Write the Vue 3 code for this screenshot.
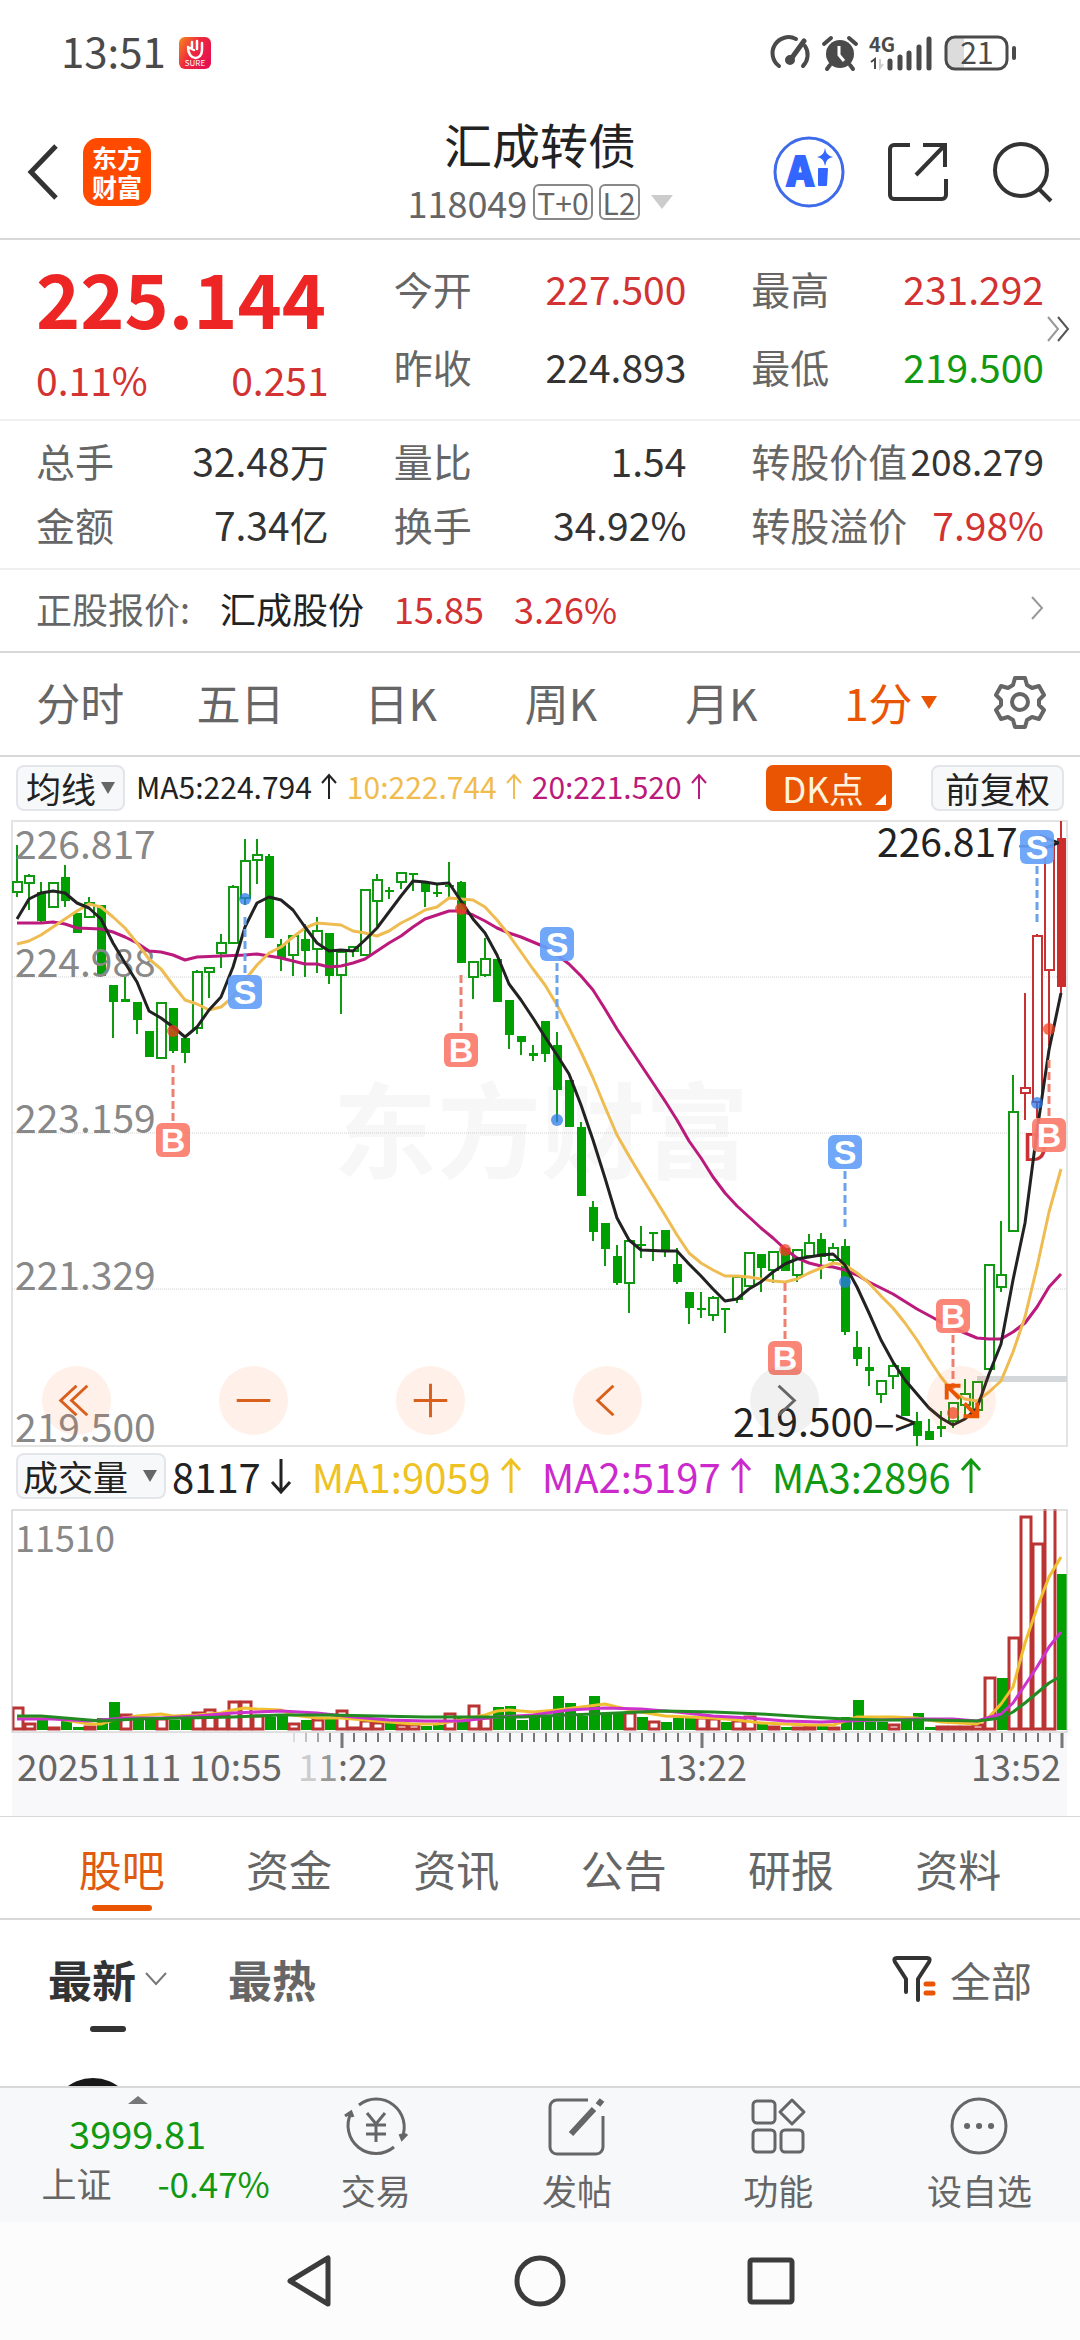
<script setup>
import { ref } from "vue";

const periods = ["分时", "五日", "日K", "周K", "月K"];
const period = ref("1分");
const average = ref("均线");
const indicator = ref("成交量");

const sections = ["股吧", "资金", "资讯", "公告", "研报", "资料"];
const section = ref("股吧");

const topQuotes = [
  [
    { label: "今开", value: "227.500", color: "red" },
    { label: "昨收", value: "224.893" },
  ],
  [
    { label: "最高", value: "231.292", color: "red" },
    { label: "最低", value: "219.500", color: "green" },
  ],
];

const details = [
  { label: "总手", value: "32.48万" },
  { label: "量比", value: "1.54" },
  { label: "转股价值", value: "208.279", color: "tight" },
  { label: "金额", value: "7.34亿" },
  { label: "换手", value: "34.92%" },
  { label: "转股溢价", value: "7.98%", color: "red" },
];

const averages = [
  { text: "MA5:224.794", color: "black" },
  { text: "10:222.744", color: "amber" },
  { text: "20:221.520", color: "magenta" },
];

const volumeAverages = [
  { text: "MA1:9059", color: "yellow" },
  { text: "MA2:5197", color: "purple" },
  { text: "MA3:2896", color: "green" },
];

const step = 12;
const xAt = (i) => 17 + i * step;

// kind (h hollow, f filled), body top, body bottom, high, low
const candles = [
  ["h", 61, 71, 24, 76], ["h", 55, 62, 53, 89], ["f", 71, 100, 61, 103], ["h", 62, 86, 62, 86],
  ["f", 56, 80, 44, 86], ["f", 92, 112, 92, 112], ["h", 82, 96, 76, 96], ["f", 84, 155, 84, 155],
  ["f", 164, 181, 164, 217], ["f", 178, 181, 156, 181], ["f", 181, 199, 181, 213], ["f", 210, 236, 210, 236],
  ["h", 182, 237, 181, 237], ["f", 187, 230, 187, 232], ["f", 217, 232, 217, 242], ["h", 151, 207, 149, 213],
  ["h", 147, 151, 147, 177], ["h", 122, 132, 113, 147], ["h", 66, 122, 64, 122], ["h", 40, 77, 18, 84],
  ["h", 34, 39, 18, 63], ["f", 35, 117, 33, 117], ["f", 123, 137, 118, 150], ["h", 115, 134, 115, 155],
  ["f", 118, 130, 103, 156], ["h", 110, 128, 96, 152], ["f", 112, 155, 112, 163], ["h", 131, 154, 131, 193],
  ["h", 126, 130, 126, 136], ["h", 69, 134, 69, 134], ["h", 59, 80, 53, 105], ["f", 69, 71, 66, 78],
  ["h", 52, 61, 52, 68], ["f", 52, 54, 52, 70], ["f", 62, 71, 62, 86], ["f", 71, 73, 64, 76],
  ["f", 64, 66, 41, 76], ["f", 61, 142, 60, 142], ["h", 141, 156, 141, 178], ["h", 138, 154, 117, 156],
  ["f", 138, 181, 138, 181], ["f", 179, 214, 179, 228], ["f", 215, 221, 215, 234], ["f", 232, 235, 224, 240],
  ["f", 200, 233, 200, 241], ["f", 224, 269, 211, 301], ["f", 259, 306, 259, 306], ["f", 306, 375, 301, 375],
  ["f", 386, 411, 380, 420], ["f", 402, 428, 402, 445], ["f", 435, 462, 424, 464], ["h", 420, 462, 420, 492],
  ["f", 423, 425, 405, 437], ["f", 411, 413, 411, 440], ["f", 409, 431, 409, 436], ["f", 443, 461, 427, 463],
  ["f", 471, 487, 471, 503], ["f", 487, 489, 471, 497], ["h", 477, 494, 475, 500], ["f", 487, 489, 487, 512],
  ["h", 456, 478, 456, 482], ["h", 432, 465, 432, 465], ["f", 433, 447, 433, 471], ["h", 431, 449, 431, 462],
  ["f", 427, 450, 427, 450], ["h", 429, 454, 429, 461], ["h", 422, 435, 413, 436], ["f", 418, 436, 412, 458],
  ["h", 427, 439, 422, 443], ["f", 425, 511, 418, 514], ["f", 526, 538, 510, 545], ["f", 546, 550, 526, 565],
  ["h", 560, 573, 560, 582], ["h", 545, 555, 542, 568], ["f", 546, 595, 546, 595], ["f", 600, 615, 591, 625],
  ["f", 610, 619, 598, 619], ["f", 605, 608, 590, 616], ["h", 582, 600, 582, 607], ["h", 573, 584, 558, 594],
  ["h", 561, 589, 561, 589], ["h", 444, 548, 444, 548], ["h", 454, 466, 400, 471], ["h", 291, 410, 254, 410],
  ["h", 267, 272, 172, 299], ["h", 115, 281, 113, 297], ["h", 26, 149, 26, 225], ["f", 17, 166, 0, 172],
].map(([kind, top, bottom, high, low], i) => ({
  x: xAt(i),
  hollow: kind === "h",
  color: i > 83 ? "#c83232" : "#119a11",
  fill: i > 83 ? "#cc2e2e" : "#00a000",
  top,
  bottom,
  high,
  low,
}));

const ma5 =
  "17,98 29,78 41,72 53,70 65,72 77,82 89,87 101,98 113,122 125,142 137,161 149,190 161,197 173,206 185,216 197,206 209,189 221,176 233,146 245,106 257,82 269,76 281,79 293,89 305,106 317,122 329,130 341,129 353,130 365,119 377,107 389,91 401,75 413,60 425,61 437,63 449,62 461,80 473,98 485,112 497,134 509,163 521,179 533,197 545,216 557,234 569,253 581,284 593,319 605,357 617,397 629,419 641,429 665,430 677,430 689,443 701,455 713,468 725,480 737,478 749,468 761,461 773,451 785,443 797,438 809,436 821,434 833,433 845,444 857,466 869,492 881,519 893,541 905,559 917,573 929,587 941,597 953,604 965,598 977,587 989,553 1001,523 1013,459 1025,402 1037,310 1049,229 1061,172";
const ma10 =
  "17,123 29,120 41,114 53,106 65,98 77,90 89,83 101,86 113,96 125,107 137,122 149,138 161,148 173,164 185,179 197,183 209,189 221,186 233,176 245,159 257,144 269,132 281,126 293,116 305,107 317,102 341,104 353,110 365,112 377,115 389,110 401,102 413,96 425,89 437,86 449,77 461,78 473,79 485,86 497,99 509,114 521,131 533,148 545,164 557,184 569,207 581,231 593,257 605,286 617,314 629,335 641,355 665,394 677,414 689,432 701,442 713,449 725,455 737,455 749,456 761,458 773,460 785,461 797,458 809,452 821,447 833,442 845,444 857,452 869,462 881,475 893,487 905,502 917,519 929,538 941,556 953,571 965,578 977,580 989,571 1001,560 1013,531 1025,496 1037,446 1049,391 1061,348";
const ma20 =
  "17,102 41,102 53,101 65,103 77,107 101,108 113,111 125,116 137,122 149,130 161,131 173,134 185,139 197,136 221,135 245,134 257,133 269,135 281,137 293,140 305,143 317,143 329,146 341,145 353,142 365,138 377,130 389,122 401,115 413,106 425,98 437,94 449,90 461,90 473,94 485,100 497,107 509,112 521,116 533,121 545,126 557,134 569,143 581,155 593,169 605,188 617,208 629,226 641,244 653,262 665,280 677,299 689,320 701,337 713,356 725,372 737,385 749,396 761,407 773,417 785,428 797,437 809,442 821,445 833,446 845,449 857,454 869,461 893,473 917,488 941,501 953,507 965,512 977,517 989,518 1001,518 1013,511 1025,502 1037,486 1049,466 1061,453";

const priceLabels = [
  { text: "226.817", y: 38 },
  { text: "224.988", y: 156 },
  { text: "223.159", y: 312 },
  { text: "221.329", y: 469 },
  { text: "219.500", y: 621 },
];

const signals = [
  { type: "B", x: 173, y: 319, from: 244, to: 302, dot: 210 },
  { type: "S", x: 245, y: 171, from: 96, to: 153, dot: 78 },
  { type: "B", x: 461, y: 229, from: 154, to: 212, dot: 88 },
  { type: "S", x: 557, y: 123, from: 142, to: 199, dot: 299 },
  { type: "B", x: 785, y: 537, from: 462, to: 519, dot: 429 },
  { type: "S", x: 845, y: 331, from: 350, to: 407, dot: 461 },
  { type: "B", x: 953, y: 495, from: 514, to: 568, dot: 592 },
  { type: "S", x: 1037, y: 26, from: 45, to: 102, dot: 282 },
  { type: "B", x: 1049, y: 314, from: 239, to: 296, dot: 208 },
];

// r red outline, g green block, then the top edge of the bar
const volumes =
  "r198 r214 g210 r218 g212 g218 r217 g209 g193 r205 g209 g208 r209 g211 g205 r203 r200 r206 r192 r192 r206 g208 g206 r214 g211 r210 g210 r201 r218 r211 r213 g214 r215 r215 g217 g216 r204 g208 r196 r208 g198 g197 g211 g207 g207 g187 g194 g207 g187 g204 g203 r203 g208 r212 g213 g209 g207 r208 r209 g213 r211 r207 g215 r217 g218 r218 r217 g217 r218 g208 g191 g213 g213 r215 g212 g204 g218 r217 r217 r217 r215 r168 g169 r128 r7 r34 r-4 g65"
    .split(" ")
    .map((bar, i) => ({ x: xAt(i), red: bar[0] === "r", top: Number(bar.slice(1)) }));

const volumeLine = (values) => values.map(([i, y]) => `${xAt(i)},${y}`).join(" ");
const volumeLines = [
  {
    color: "#f0bf30",
    points: volumeLine([[0, 208], [2, 208], [4, 211], [6, 215], [7, 215], [8, 211], [10, 207], [12, 205], [13, 207], [15, 206], [17, 204], [18, 201], [19, 199], [20, 200], [22, 201], [23, 206], [25, 209], [27, 209], [29, 211], [31, 213], [33, 215], [35, 215], [37, 211], [39, 206], [40, 202], [41, 201], [43, 203], [45, 201], [47, 198], [49, 195], [50, 198], [52, 203], [54, 207], [56, 208], [58, 209], [60, 211], [62, 214], [64, 215], [66, 216], [68, 216], [70, 208], [73, 208], [75, 209], [77, 213], [80, 215], [81, 208], [82, 195], [83, 178], [84, 134], [85, 99], [86, 68], [87, 48]]),
  },
  {
    color: "#cc33cc",
    points: volumeLine([[0, 210], [3, 210], [6, 212], [9, 209], [12, 209], [15, 207], [18, 204], [20, 203], [22, 202], [25, 204], [28, 208], [31, 211], [34, 212], [37, 212], [40, 208], [43, 206], [46, 201], [49, 199], [52, 200], [55, 203], [58, 207], [61, 209], [64, 212], [67, 213], [69, 212], [72, 211], [75, 210], [78, 210], [80, 212], [82, 205], [83, 194], [84, 176], [85, 158], [86, 138], [87, 123]]),
  },
  {
    color: "#228b22",
    points: volumeLine([[0, 207], [2, 207], [5, 210], [7, 212], [10, 210], [14, 209], [18, 208], [22, 206], [26, 206], [30, 207], [34, 208], [38, 208], [42, 208], [46, 206], [50, 204], [54, 202], [58, 203], [62, 205], [66, 208], [69, 210], [72, 211], [76, 211], [80, 212], [82, 209], [83, 203], [84, 194], [85, 184], [86, 174], [87, 167]]),
  },
];

const ticks = Array.from({ length: 65 }, (_, i) => ({
  x: 294 + i * step,
  major: i % 30 === 4,
  opacity: Math.min(1, 0.2 + i * 0.22),
}));
</script>

<template>
  <div class="page">
    <div class="status">
      <span class="clock">13:51</span>
      <svg class="app-badge" width="32" height="32" viewBox="0 0 32 32">
        <defs>
          <linearGradient id="badge" x1="0" y1="0" x2="1" y2="0.6">
            <stop offset="0" stop-color="#f68a1e" />
            <stop offset="0.5" stop-color="#ee2a3c" />
            <stop offset="1" stop-color="#e6124f" />
          </linearGradient>
        </defs>
        <rect width="32" height="32" rx="6" fill="url(#badge)" />
        <path d="M9 10c0 14 14 14 14 3V6M13 5v7M18 4v8M9 10l6 3" fill="none" stroke="#fff" stroke-width="2.5" stroke-linecap="round" />
        <text x="16" y="29" font-size="8" fill="#fff" text-anchor="middle">SURE</text>
      </svg>
      <div class="status-icons">
        <svg width="40" height="36" viewBox="0 0 40 36" fill="none" stroke="#4a4a4a" stroke-width="4" stroke-linecap="round">
          <path d="M8 31A16 16 0 0 1 25 4M34 11A16 16 0 0 1 32 31" />
          <path d="M33 6 20 24" stroke-width="5" />
          <circle cx="19" cy="25" r="3" />
        </svg>
        <svg width="36" height="36" viewBox="0 0 36 36">
          <circle cx="18" cy="19" r="14" fill="#4a4a4a" />
          <path d="M2 9 9 3M34 9 27 3M8 30 5 34M28 30l3 4" stroke="#4a4a4a" stroke-width="4" stroke-linecap="round" />
          <path d="M17 11v9l5 6" fill="none" stroke="#fff" stroke-width="3" />
        </svg>
        <svg width="64" height="36" viewBox="0 0 64 36">
          <text x="0" y="17" font-size="20" font-weight="bold" fill="#4a4a4a">4G</text>
          <path d="M2 27l4-3v10" fill="none" stroke="#4a4a4a" stroke-width="2" />
          <path d="M11 24v9l3-4" fill="none" stroke="#ccc" stroke-width="2" />
          <path d="M21 26v7M31 22v11M40 18v15M50 12v21M60 4v29" stroke="#4a4a4a" stroke-width="5" stroke-linecap="round" />
        </svg>
        <svg width="74" height="36" viewBox="0 0 74 36">
          <path d="M10 2h10v32H10a8 8 0 0 1-8-8V10a8 8 0 0 1 8-8z" fill="#dcdcdc" />
          <rect x="2" y="2" width="61" height="32" rx="9" fill="none" stroke="#4a4a4a" stroke-width="3" />
          <path d="M70 13v10" stroke="#4a4a4a" stroke-width="4" stroke-linecap="round" />
          <text x="33" y="29" font-size="30" fill="#4a4a4a" text-anchor="middle">21</text>
        </svg>
      </div>
    </div>

    <header class="header">
      <div class="header-left">
        <button class="plain" aria-label="返回">
          <svg width="34" height="60" viewBox="0 0 34 60">
            <path d="M30 4 5 30l25 26" fill="none" stroke="#333" stroke-width="5" />
          </svg>
        </button>
        <div class="logo"><span>东方</span><span>财富</span></div>
      </div>
      <div class="title">
        <h1>汇成转债</h1>
        <div class="code">
          <span>118049</span>
          <span class="tag">T+0</span>
          <span class="tag">L2</span>
          <svg width="22" height="14" viewBox="0 0 22 14"><path d="M0 0h22L11 14z" fill="#ccc" /></svg>
        </div>
      </div>
      <div class="header-right">
        <button class="plain" aria-label="Ai">
          <svg width="72" height="72" viewBox="0 0 72 72">
            <circle cx="36" cy="36" r="34" fill="none" stroke="#3d6bea" stroke-width="3" />
            <text x="14" y="50" font-size="40" class="ai">A</text>
            <path d="M46 33h8l-1 16h-7z" fill="#3366ff" stroke="#3366ff" stroke-width="2" stroke-linejoin="round" />
            <path d="M52 12q1 8 8 9-7 1-8 9-1-8-8-9 7-1 8-9z" fill="#3366ff" />
          </svg>
        </button>
        <button class="plain" aria-label="分享">
          <svg width="62" height="62" viewBox="0 0 62 62" fill="none" stroke="#333" stroke-width="4">
            <path d="M23 4H7a4 4 0 0 0-4 4v46a4 4 0 0 0 4 4h48a4 4 0 0 0 4-4V38" />
            <path d="M36 4h22v22M58 4 29 34" />
          </svg>
        </button>
        <button class="plain" aria-label="搜索">
          <svg width="62" height="62" viewBox="0 0 62 62" fill="none" stroke="#333" stroke-width="4">
            <circle cx="30" cy="29" r="26" />
            <path d="M48 48 60 60" />
          </svg>
        </button>
      </div>
    </header>

    <section class="quote">
      <div class="quote-price">
        <div class="price">225.144</div>
        <div class="pair red"><span>0.11%</span><span>0.251</span></div>
      </div>
      <div v-for="(col, i) in topQuotes" :key="i" class="quote-col">
        <div v-for="item in col" :key="item.label" class="pair">
          <span class="label">{{ item.label }}</span>
          <span :class="item.color">{{ item.value }}</span>
        </div>
      </div>
      <svg class="more" width="24" height="28" viewBox="0 0 24 28" fill="none" stroke-width="2">
        <path d="M1 2l10 12L1 26" stroke="#999" />
        <path d="M11 2l10 12-10 12" stroke="#555" />
      </svg>
    </section>

    <section class="details">
      <div v-for="item in details" :key="item.label" class="pair">
        <span class="label">{{ item.label }}</span>
        <span :class="item.color">{{ item.value }}</span>
      </div>
    </section>

    <a class="stock" href="#">
      <span class="label">正股报价:</span>
      <span class="stock-name">汇成股份</span>
      <span class="red">15.85</span>
      <span class="red">3.26%</span>
      <svg width="14" height="24" viewBox="0 0 14 24"><path d="M2 1l10 11L2 23" fill="none" stroke="#999" stroke-width="2" /></svg>
    </a>

    <nav class="periods">
      <button v-for="p in periods" :key="p" class="plain">{{ p }}</button>
      <label class="dropdown period-now">
        <select v-model="period" aria-label="分钟周期">
          <option>1分</option>
          <option>5分</option>
        </select>
        <svg width="16" height="13" viewBox="0 0 16 13"><path d="M0 0h16L8 13z" fill="#ea5504" /></svg>
      </label>
      <button class="plain" aria-label="设置">
        <svg width="54" height="54" viewBox="0 0 54 54" fill="none" stroke="#666" stroke-width="4" stroke-linejoin="round">
          <path d="M22 3h10l2 7 5 3 7-2 5 9-5 5v5l5 5-5 9-7-2-5 3-2 7H22l-2-7-5-3-7 2-5-9 5-5v-5l-5-5 5-9 7 2 5-3z" />
          <circle cx="27" cy="27" r="8" />
        </svg>
      </button>
    </nav>

    <div class="ma-row">
      <label class="dropdown box">
        <select v-model="average" aria-label="主图指标">
          <option>均线</option>
        </select>
        <svg width="14" height="12" viewBox="0 0 14 12"><path d="M0 0h14L7 12z" fill="#666" /></svg>
      </label>
      <div class="ma-values">
        <span v-for="ma in averages" :key="ma.text" :class="ma.color">
          {{ ma.text }}<svg width="18" height="26" viewBox="0 0 18 26"><path d="M9 26V2M2 10l7-8 7 8" fill="none" stroke="currentColor" stroke-width="2" /></svg>
        </span>
      </div>
      <button class="dk">DK点</button>
      <button class="box adjust">前复权</button>
    </div>

    <div class="chart">
      <svg class="plot" viewBox="0 0 1080 626">
        <text x="541" y="350" class="watermark" text-anchor="middle">东方财富</text>
        <rect x="12" y="0" width="1055" height="625" fill="none" stroke="#e4e4e4" stroke-width="2" />
        <path d="M12 156h1055M12 312h1055M12 468h1055" stroke="#d0d0d0" stroke-dasharray="1 1" />
        <rect x="977" y="555" width="90" height="6" fill="#d3d7da" />
        <g v-for="c in candles" :key="c.x">
          <path v-if="c.hollow" :d="`M${c.x} ${c.high}V${c.top}M${c.x} ${c.bottom}V${c.low}`" :stroke="c.color" stroke-width="2" />
          <path v-else :d="`M${c.x} ${c.high}V${c.low}`" :stroke="c.color" stroke-width="2" />
          <rect v-if="c.hollow" :x="c.x - 4" :y="c.top" width="9" :height="c.bottom - c.top" fill="#fff" :stroke="c.color" stroke-width="2" />
          <rect v-else :x="c.x - 4" :y="c.top" width="9" :height="c.bottom - c.top" :fill="c.fill" />
        </g>
        <text x="1022" y="340" font-size="38" fill="#c83232">D</text>
        <text v-for="label in priceLabels" :key="label.text" x="15" :y="label.y" font-size="39" fill="#888">{{ label.text }}</text>
        <g fill="none" stroke-width="3" stroke-linejoin="round">
          <polyline :points="ma20" stroke="#bb1a7c" />
          <polyline :points="ma10" stroke="#efbc52" />
          <polyline :points="ma5" stroke="#222" />
        </g>
        <g font-size="39" fill="#222">
          <text x="877" y="36">226.817–&gt;</text>
          <text x="733" y="616">219.500–&gt;</text>
        </g>
        <g v-for="s in signals" :key="s.x" :class="s.type === 'B' ? 'buy' : 'sell'">
          <circle :cx="s.x" :cy="s.dot" r="6" class="dot" />
          <path :d="`M${s.x} ${s.from}V${s.to}`" class="dash" />
          <rect :x="s.x - 17" :y="s.y - 17" width="34" height="34" rx="6" />
          <text :x="s.x" :y="s.y + 12" text-anchor="middle">{{ s.type }}</text>
        </g>
      </svg>
      <div class="controls">
        <button aria-label="最左">
          <svg viewBox="0 0 70 70"><path d="M35 20 19 35l16 15M46 20 30 35l16 15" /></svg>
        </button>
        <button aria-label="缩小">
          <svg viewBox="0 0 70 70"><path d="M18 35h34" /></svg>
        </button>
        <button aria-label="放大">
          <svg viewBox="0 0 70 70"><path d="M18 35h34M35 18v34" /></svg>
        </button>
        <button aria-label="左移">
          <svg viewBox="0 0 70 70"><path d="M41 20 25 35l16 15" /></svg>
        </button>
        <button class="off" aria-label="右移">
          <svg viewBox="0 0 70 70"><path d="M29 20l16 15-16 15" /></svg>
        </button>
        <button class="full" aria-label="全屏">
          <svg viewBox="0 0 70 70"><path d="M20 34V20h14M20 20l13 13M51 37v14H37M51 51 38 38" /></svg>
        </button>
      </div>
    </div>

    <div class="volume-row">
      <label class="dropdown box">
        <select v-model="indicator" aria-label="副图指标">
          <option>成交量</option>
        </select>
        <svg width="14" height="12" viewBox="0 0 14 12"><path d="M0 0h14L7 12z" fill="#666" /></svg>
      </label>
      <span class="now">
        8117<svg width="22" height="36" viewBox="0 0 22 36"><path d="M11 1v33M2 24l9 10 9-10" fill="none" stroke="currentColor" stroke-width="3" /></svg>
      </span>
      <span v-for="ma in volumeAverages" :key="ma.text" :class="ma.color">
        {{ ma.text }}<svg width="22" height="36" viewBox="0 0 22 36"><path d="M11 35V2M2 12l9-10 9 10" fill="none" stroke="currentColor" stroke-width="3" /></svg>
      </span>
    </div>

    <svg class="plot" viewBox="0 0 1080 307">
      <clipPath id="volume-area"><rect x="12" y="0" width="1055" height="223" /></clipPath>
      <rect x="12" y="223" width="1055" height="84" fill="#f8f8fa" />
      <text x="15" y="43" font-size="36" fill="#888">11510</text>
      <g clip-path="url(#volume-area)">
        <g v-for="v in volumes" :key="v.x">
          <rect v-if="v.red" :x="v.x - 4" :y="v.top + 1" width="10" :height="219 - v.top" fill="#fff" stroke="#bb3434" stroke-width="3" />
          <rect v-else :x="v.x - 4" :y="v.top" width="11" :height="221 - v.top" fill="#00a000" />
        </g>
        <polyline v-for="line in volumeLines" :key="line.color" :points="line.points" fill="none" :stroke="line.color" stroke-width="3" stroke-linejoin="round" />
      </g>
      <rect x="12" y="1" width="1055" height="222" fill="none" stroke="#c4c4c4" />
      <path v-for="t in ticks" :key="t.x" :d="`M${t.x} 224v${t.major ? 15 : 9}`" :stroke-width="t.major ? 3 : 2" :opacity="t.opacity" stroke="#777" />
      <g font-size="36" fill="#666">
        <text x="17" y="272" font-size="37">20251111 10:55</text>
        <text x="298" y="272"><tspan fill="#ccc">1</tspan><tspan fill="#999">1</tspan>:22</text>
        <text x="702" y="272" text-anchor="middle">13:22</text>
        <text x="1061" y="272" text-anchor="end">13:52</text>
      </g>
    </svg>

    <nav class="sections">
      <button v-for="s in sections" :key="s" class="plain" :class="{ active: s === section }" @click="section = s">{{ s }}</button>
    </nav>

    <div class="posts">
      <div class="sort">
        <button class="plain newest">
          最新<svg width="22" height="14" viewBox="0 0 22 14"><path d="M1 1l10 11L21 1" fill="none" stroke="#777" stroke-width="2" /></svg>
        </button>
        <button class="plain hottest">最热</button>
        <button class="plain filter">
          <svg width="46" height="48" viewBox="0 0 46 48" fill="none" stroke-linecap="round">
            <path d="M14 37V24L3 7q-2-4 2-4h30q4 0 2 4L26 24v21" stroke="#333" stroke-width="4" stroke-linejoin="round" />
            <path d="M34 29h7M34 38h7" stroke="#ea5504" stroke-width="5" />
          </svg>
          全部
        </button>
      </div>
      <div class="post">
        <div class="avatar"></div>
      </div>
    </div>

    <footer class="toolbar">
      <a class="index" href="#">
        <svg width="20" height="8" viewBox="0 0 20 8"><path d="M10 0l10 8H0z" fill="#777" /></svg>
        <span class="index-value">3999.81</span>
        <span class="index-change"><span>上证</span><span class="green">-0.47%</span></span>
      </a>
      <button class="plain tool">
        <svg width="66" height="60" viewBox="0 0 66 60" fill="none" stroke="#666" stroke-width="3">
          <path d="M16 9A28 28 0 0 1 59 42M51 51A28 28 0 0 1 8 17M2 20l6-4 2 5M64 38l-5 5-2-5" />
          <path d="M24 17l9 11 9-11M33 28v18M23 29h20M23 38h20" />
        </svg>
        交易
      </button>
      <button class="plain tool">
        <svg width="66" height="60" viewBox="0 0 66 60" fill="none" stroke="#666" stroke-width="3">
          <path d="M44 4H13a7 7 0 0 0-7 7v40a7 7 0 0 0 7 7h39a7 7 0 0 0 7-7V20" />
          <path d="M27 38 50 13M54 9l4-5" stroke-width="6" />
        </svg>
        发帖
      </button>
      <button class="plain tool">
        <svg width="66" height="60" viewBox="0 0 66 60" fill="none" stroke="#666" stroke-width="3">
          <rect x="8" y="5" width="22" height="22" rx="4" />
          <rect x="8" y="34" width="22" height="22" rx="4" />
          <rect x="36" y="34" width="22" height="22" rx="4" />
          <path d="M47 4 59 16 47 28 35 16z" stroke-linejoin="round" />
        </svg>
        功能
      </button>
      <button class="plain tool">
        <svg width="66" height="60" viewBox="0 0 66 60" fill="none" stroke="#666" stroke-width="3">
          <circle cx="33" cy="30" r="27" />
          <path d="M21 30h.1M33 30h.1M45 30h.1" stroke-width="6" stroke-linecap="round" />
        </svg>
        设自选
      </button>
    </footer>

    <div class="system-nav">
      <svg width="48" height="54" viewBox="0 0 48 54"><path d="M43 4v46L5 27z" /></svg>
      <svg width="54" height="54" viewBox="0 0 54 54"><circle cx="27" cy="27" r="23" /></svg>
      <svg width="48" height="54" viewBox="0 0 48 54"><rect x="3" y="6" width="42" height="42" rx="2" /></svg>
    </div>
  </div>
</template>

<style>
body {
  margin: 0;
  background: #fff;
}
</style>

<style scoped>
.page {
  display: flex;
  flex-direction: column;
  min-height: 100vh;
  font-family: "Noto Sans CJK SC", sans-serif;
  font-size: 39px;
  color: #333;
}
svg {
  display: block;
  flex: none;
  overflow: visible;
}
button,
select {
  font: inherit;
  color: inherit;
  border: 0;
  margin: 0;
}
.plain {
  display: flex;
  align-items: center;
  justify-content: center;
  padding: 0;
  background: none;
}
a {
  color: inherit;
  text-decoration: none;
}
.red {
  color: #d23232;
}
.green {
  color: #119911;
}
.black {
  color: #222;
}
.amber {
  color: #f0bc50;
}
.magenta {
  color: #bb1a7c;
}
.yellow {
  color: #eec223;
}
.purple {
  color: #cc29cc;
}
.label {
  color: #666;
}

.status {
  display: flex;
  align-items: center;
  height: 106px;
  padding: 0 62px 0 61px;
  color: #4a4a4a;
}
.clock {
  font-size: 42px;
  line-height: 98px;
  padding-bottom: 6px;
}
.app-badge {
  margin-left: 13px;
}
.status-icons {
  display: flex;
  gap: 11px;
  margin-left: auto;
}

.header {
  display: grid;
  grid-template-columns: 1fr auto 1fr;
  align-items: center;
  height: 132px;
  border-bottom: 2px solid #d8d8d8;
}
.header-left {
  display: flex;
  align-items: center;
  gap: 23px;
  padding-left: 26px;
}
.logo {
  display: flex;
  flex-direction: column;
  align-items: center;
  justify-content: center;
  width: 68px;
  height: 68px;
  border-radius: 15px;
  background: #ff4a00;
  color: #fff;
  font-size: 25px;
  font-weight: bold;
  line-height: 29px;
}
.title {
  text-align: center;
}
h1 {
  margin: 0;
  font-size: 48px;
  font-weight: normal;
  line-height: 60px;
  color: #222;
}
.code {
  display: flex;
  align-items: center;
  justify-content: center;
  gap: 6px;
  font-size: 36px;
  line-height: 58px;
  color: #666;
}
.tag {
  padding: 0 2px;
  border: 2px solid #888;
  border-radius: 6px;
  font-size: 30px;
  line-height: 32px;
}
.code svg {
  margin-left: 5px;
}
.header-right {
  display: flex;
  align-items: center;
  justify-content: flex-end;
  gap: 42px;
  padding-right: 27px;
}
.ai {
  font-weight: 900;
  fill: #3366ff;
  stroke: #3366ff;
  stroke-width: 2px;
}

.quote,
.details {
  display: grid;
  grid-template-columns: repeat(3, minmax(0, 1fr));
  column-gap: 65px;
  padding: 0 36px;
  border-bottom: 2px solid #efefef;
  line-height: 52px;
}
.quote {
  position: relative;
  height: 179px;
}
.price {
  padding-top: 12px;
  font-size: 75px;
  font-weight: bold;
  line-height: 90px;
  color: #ee2525;
}
.quote-price .pair {
  padding-top: 11px;
}
.quote-col {
  display: flex;
  flex-direction: column;
  gap: 26px;
  padding-top: 22px;
}
.pair {
  display: flex;
  justify-content: space-between;
  white-space: nowrap;
}
.more {
  position: absolute;
  right: 9px;
  top: 75px;
}
.details {
  row-gap: 12px;
  padding-top: 13px;
  padding-bottom: 18px;
}
.tight {
  font-size: 37px;
}
.stock {
  display: flex;
  align-items: center;
  gap: 30px;
  padding: 0 36px 5px;
  border-bottom: 2px solid #d8d8d8;
  font-size: 36px;
  line-height: 76px;
}
.stock-name {
  color: #222;
}
.stock svg {
  margin-left: auto;
}

.periods {
  display: grid;
  grid-template-columns: repeat(5, 160fr) 178fr 80fr;
  align-items: center;
  height: 98px;
  padding-right: 20px;
  padding-bottom: 4px;
  border-bottom: 2px solid #d8d8d8;
  font-size: 44px;
  line-height: 64px;
  color: #666;
}
.dropdown {
  display: flex;
  align-items: center;
  justify-content: center;
}
select {
  appearance: none;
  padding: 0;
  background: none;
  outline: 0;
}
.period-now {
  gap: 8px;
  color: #ea5504;
}
.ma-row {
  display: flex;
  align-items: center;
  height: 62px;
  padding: 0 16px 2px;
}
.box {
  border: 2px solid #e4e5ea;
  border-radius: 8px;
  background: #f7f8fa;
  color: #222;
  font-size: 35px;
  line-height: 42px;
}
.ma-row .dropdown {
  gap: 4px;
  padding: 0 8px;
}
.ma-values {
  display: flex;
  gap: 9px;
  margin-left: 11px;
  padding-bottom: 4px;
  font-size: 30px;
  line-height: 44px;
}
.ma-values span {
  display: flex;
  align-items: center;
  gap: 8px;
}
.dk {
  position: relative;
  width: 126px;
  margin-left: auto;
  padding: 0 12px 0 0;
  border-radius: 7px;
  background: #ea5504;
  color: #fff3dd;
  font-size: 35px;
  line-height: 46px;
}
.dk::after {
  content: "";
  position: absolute;
  right: 6px;
  bottom: 6px;
  border-bottom: 11px solid #fff;
  border-left: 11px solid transparent;
}
.adjust {
  margin-left: 39px;
  padding: 0 12px;
}

.plot {
  width: 100%;
}
.chart {
  position: relative;
}
.watermark {
  font-size: 104px;
  font-weight: bold;
  fill: #f7f7f7;
}
.buy {
  fill: #fa7c6c;
  stroke: #ee8070;
}
.sell {
  fill: #64a0f8;
  stroke: #6aa2ec;
}
.buy rect,
.sell rect,
.buy circle,
.sell circle {
  stroke: none;
}
.buy rect,
.sell rect {
  fill-opacity: 0.92;
}
.buy .dot {
  fill: #f04020;
  fill-opacity: 0.75;
}
.sell .dot {
  fill: #2a7ae8;
  fill-opacity: 0.75;
}
.dash {
  stroke-width: 3px;
  stroke-dasharray: 8 4;
}
.buy text,
.sell text {
  font-family: "Liberation Sans", sans-serif;
  font-size: 34px;
  font-weight: bold;
  fill: #fff;
  stroke: none;
}
.controls {
  position: absolute;
  left: 42px;
  right: 84px;
  bottom: 12px;
  display: flex;
  justify-content: space-between;
}
.controls button {
  width: 69px;
  height: 69px;
  padding: 0;
  border-radius: 50%;
  background: rgba(255, 110, 40, 0.1);
}
.controls path {
  fill: none;
  stroke: #d9601c;
  stroke-width: 3px;
}
.controls .off {
  background: rgba(60, 60, 60, 0.07);
}
.controls .off path {
  stroke: #666;
}
.controls .full path {
  stroke: #ea5504;
  stroke-width: 4px;
}

.volume-row {
  display: flex;
  align-items: center;
  gap: 20px;
  height: 58px;
  padding: 0 16px 4px;
  font-size: 40px;
  line-height: 56px;
  white-space: nowrap;
}
.volume-row .dropdown {
  gap: 14px;
  margin-right: -14px;
  padding: 0 7px 0 5px;
  line-height: 42px;
}
.volume-row span {
  display: flex;
  align-items: center;
  gap: 9px;
}
.now {
  color: #222;
}

.sections {
  display: grid;
  grid-template-columns: repeat(6, 1fr);
  height: 101px;
  padding: 0 38px;
  border-top: 1px solid #d8d8d8;
  border-bottom: 2px solid #d8d8d8;
  font-size: 43px;
  color: #666;
}
.sections .plain {
  position: relative;
}
.active {
  color: #e05a10;
}
.active::after {
  content: "";
  position: absolute;
  bottom: 7px;
  width: 60px;
  height: 6px;
  border-radius: 3px;
  background: #ea5504;
}
.posts {
  flex: 1;
  overflow: hidden;
}
.sort {
  display: flex;
  align-items: center;
  height: 118px;
  padding: 0 48px;
  font-size: 44px;
  font-weight: bold;
}
.newest {
  position: relative;
  height: 100%;
  gap: 9px;
}
.newest::after {
  content: "";
  position: absolute;
  bottom: 6px;
  width: 36px;
  height: 6px;
  border-radius: 3px;
  background: #333;
}
.hottest {
  margin-left: 61px;
  color: #666;
}
.filter {
  gap: 12px;
  margin-left: auto;
  color: #666;
  font-size: 41px;
  font-weight: normal;
}
.post {
  height: 8px;
  margin-top: 40px;
  padding-left: 50px;
  overflow: hidden;
}
.avatar {
  width: 86px;
  height: 86px;
  border-radius: 50%;
  background: #181818;
}

.toolbar {
  display: grid;
  grid-template-columns: 275fr repeat(4, 201fr);
  height: 134px;
  border-top: 2px solid #d8d8d8;
  background: #f7f8fa;
  font-size: 35px;
  color: #666;
}
.index {
  display: flex;
  flex-direction: column;
  align-items: center;
  padding-top: 8px;
}
.index-value {
  font-size: 38px;
  line-height: 58px;
  color: #119911;
}
.index-change {
  display: flex;
  gap: 46px;
  padding-left: 36px;
  line-height: 42px;
  white-space: nowrap;
}
.tool {
  flex-direction: column;
  gap: 9px;
  line-height: 50px;
}
.system-nav {
  display: flex;
  justify-content: center;
  gap: 180px;
  padding: 32px 0;
  background: #fcfcfc;
}
.system-nav svg {
  fill: none;
  stroke: #3c3c3c;
  stroke-width: 5px;
  stroke-linejoin: round;
}
</style>
